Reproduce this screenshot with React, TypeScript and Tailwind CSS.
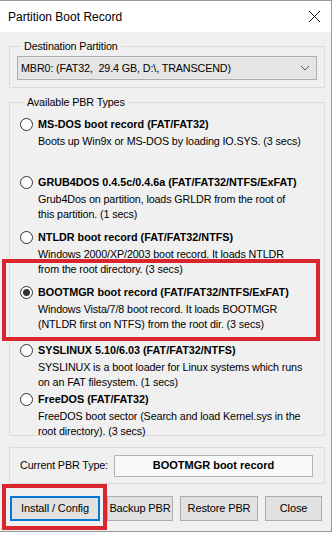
import { useState } from "react";

type PbrType = {
    id: string;
    title: string;
    desc: string[];
    height: string;
};

const pbrTypes: PbrType[] = [
    { id: "msdos", title: "MS-DOS boot record (FAT/FAT32)", desc: ["Boots up Win9x or MS-DOS by loading IO.SYS. (3 secs)"], height: "h-[58px]" },
    { id: "grub", title: "GRUB4DOS 0.4.5c/0.4.6a (FAT/FAT32/NTFS/ExFAT)", desc: ["Grub4Dos on partition, loads GRLDR from the root of", "this partition. (1 secs)"], height: "h-[55px]" },
    { id: "ntldr", title: "NTLDR boot record (FAT/FAT32/NTFS)", desc: ["Windows 2000/XP/2003 boot record. It loads NTLDR", "from the root directory. (3 secs)"], height: "h-[55px]" },
    { id: "bootmgr", title: "BOOTMGR boot record (FAT/FAT32/NTFS/ExFAT)", desc: ["Windows Vista/7/8 boot record. It loads BOOTMGR", "(NTLDR first on NTFS) from the root dir. (3 secs)"], height: "h-[58px]" },
    { id: "syslinux", title: "SYSLINUX 5.10/6.03 (FAT/FAT32/NTFS)", desc: ["SYSLINUX is a boot loader for Linux systems which runs", "on an FAT filesystem. (1 secs)"], height: "h-[49px]" },
    { id: "freedos", title: "FreeDOS (FAT/FAT32)", desc: ["FreeDOS boot sector (Search and load Kernel.sys in the", "root directory). (3 secs)"], height: "h-[45px]" },
];

const Radio = ({ checked }: { checked: boolean }) => (
    <span className="w-[13px] h-[13px] rounded-full border border-[#333] bg-white flex items-center justify-center shrink-0">
        {checked && <span className="w-[7px] h-[7px] rounded-full bg-[#333]" />}
    </span>
);

const Button = ({ label, width, focused }: { label: string; width: string; focused?: boolean }) => (
    <button
        className={
            focused
                ? `${width} h-[25px] bg-[#e1e1e1] border-2 border-[#0078d7] whitespace-nowrap text-black`
                : `${width} h-[25px] bg-[#e1e1e1] border border-[#adadad] whitespace-nowrap text-black`
        }
    >
        {label}
    </button>
);

const App = () => {
    const [selected, setSelected] = useState<string>("bootmgr");

    return (
        <div className="w-[335px] h-[534px] bg-white relative overflow-hidden" style={{ fontFamily: '"Liberation Sans", Arial, sans-serif' }}>
            <div className="w-[332px] h-[532px] border border-[#9a9a9a] border-l-0 flex flex-col">
                {/* title bar */}
                <div className="h-[31px] bg-white flex items-center justify-between pl-[8px] pr-[10px] shrink-0">
                    <span className="text-[12px] text-black">Partition Boot Record</span>
                    <svg width="13" height="13" viewBox="0 0 13 13">
                        <path d="M1 1 L12 12 M12 1 L1 12" stroke="#111" strokeWidth="1" />
                    </svg>
                </div>

                <div className="flex-1 bg-[#f0f0f0] pl-[9px] pr-[6px] pt-[7px] text-[10.75px] tracking-[-0.12px] text-black whitespace-nowrap">
                    <fieldset className="border border-[#dcdcdc] px-[7px] pb-[7px] pt-[2px]">
                        <legend className="ml-[4px] px-[3px] leading-[15px]">Destination Partition</legend>
                        <div className="h-[24px] bg-[#e5e5e5] border border-[#adadad] flex items-center justify-between pl-[3px] pr-[6px]">
                            <span className="whitespace-pre">MBR0: (FAT32,  29.4 GB, D:\, TRANSCEND)</span>
                            <svg width="10" height="6" viewBox="0 0 10 6">
                                <path d="M1 1 L5 5 L9 1" stroke="#555" strokeWidth="1" fill="none" />
                            </svg>
                        </div>
                    </fieldset>

                    <fieldset className="border border-[#dcdcdc] mt-[7px] pl-[10px] pr-[4px] pt-[5px]">
                        <legend className="ml-[4px] px-[3px] leading-[15px]">Available PBR Types</legend>
                        {pbrTypes.map((item) => (
                            <div key={item.id} className={item.height} onClick={() => setSelected(item.id)}>
                                <div className="h-[18px] flex items-center gap-[5px]">
                                    <Radio checked={selected === item.id} />
                                    <span className="font-bold text-[10.8px] tracking-normal">{item.title}</span>
                                </div>
                                <div className="pl-[18px] mt-[1px]">
                                    {item.desc.map((line) => (
                                        <div key={line} className="leading-[15px]">{line}</div>
                                    ))}
                                </div>
                            </div>
                        ))}
                    </fieldset>

                    <div className="border border-[#dcdcdc] mt-[11px] h-[37px] flex items-center pl-[10px] pr-[11px]">
                        <span className="w-[94px]">Current PBR Type:</span>
                        <div className="flex-1 h-[22px] bg-[#f9f9f9] border border-[#b4b4b4] flex items-center justify-center font-bold text-[11px] tracking-normal">
                            BOOTMGR boot record
                        </div>
                    </div>

                    <div className="flex gap-[7px] mt-[12px] pl-[1px] text-[11px]">
                        <Button label="Install / Config" width="w-[90px]" focused />
                        <Button label="Backup PBR" width="w-[66px]" />
                        <Button label="Restore PBR" width="w-[78px]" />
                        <Button label="Close" width="w-[57px]" />
                    </div>
                </div>
            </div>

            {/* annotation boxes */}
            <div className="absolute left-[2px] top-[259px] w-[318px] h-[82px] border-4 border-[#d9262e]" />
            <div className="absolute left-[2px] top-[484px] w-[105px] h-[46px] border-4 border-[#d9262e]" />
        </div>
    );
};

export default App;
